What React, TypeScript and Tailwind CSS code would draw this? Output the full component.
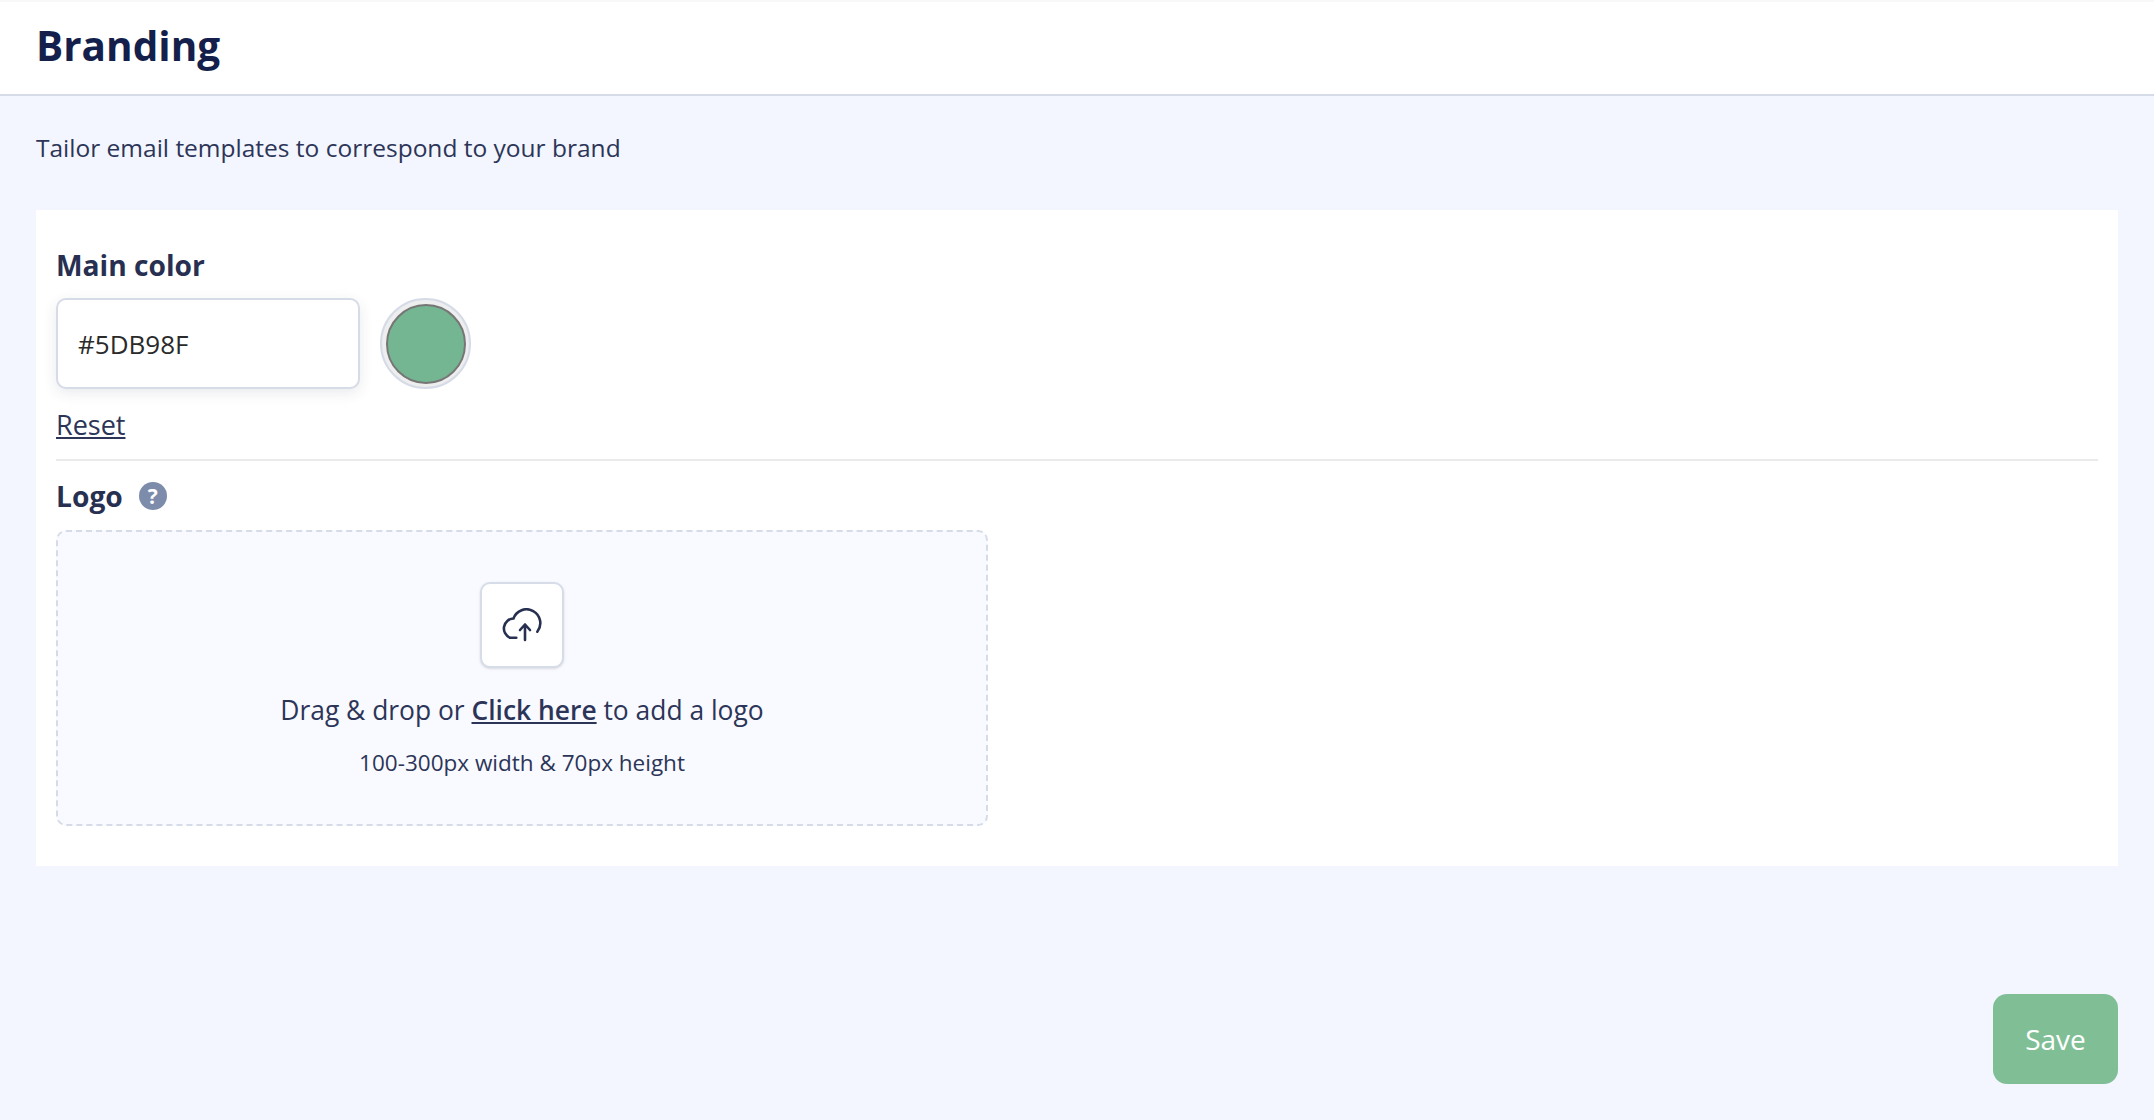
export default function App() {
  return (
    <div className="flex h-[1120px] flex-col bg-[#f3f6fe] font-['Open_Sans',sans-serif] text-[#2c3558]">
      <header className="flex h-[96px] items-center border-t-2 border-b-2 border-t-[#f8f8f8] border-b-[#d6dbe8] bg-white px-9 pb-[3px]">
        <h1 className="text-[40.5px] leading-none font-bold text-[#141f4b]">Branding</h1>
      </header>

      <div className="flex flex-1 flex-col px-9">
        <p className="mt-[37px] text-[24.5px] leading-[30px]">Tailor email templates to correspond to your brand</p>

        <section className="mt-[47px] bg-white px-5 pt-[36px] pb-[40px]">
          <h2 className="text-[28.2px] leading-[38px] font-bold text-[#283052]">Main color</h2>
          <div className="mt-[14px] flex items-center gap-5">
            <input
              readOnly
              value="#5DB98F"
              className="h-[91px] w-[304px] rounded-[10px] border-2 border-[#d6dbe8] bg-white px-5 text-[26px] text-[#2a2a2a] shadow-[0_4px_14px_rgba(40,48,82,0.1)]"
            />
            <div className="flex h-[91px] w-[91px] items-center justify-center rounded-full border-2 border-[#d6dbe8] bg-[#eeeeee]">
              <div className="h-[80px] w-[80px] rounded-full border-[2px] border-[#767676] bg-[#75b692]" />
            </div>
          </div>
          <a className="mt-[18px] block w-fit text-[27px] leading-[35px] underline">Reset</a>
          <div className="mt-[17px] h-[2px] bg-[#eaeaea]" />
          <div className="mt-[16px] flex items-center gap-4">
            <h2 className="text-[28.2px] leading-[38px] font-bold text-[#283052]">Logo</h2>
            <span className="flex h-7 w-7 items-center justify-center rounded-full bg-[#7d8cab] text-[21px] leading-none font-bold text-white">?</span>
          </div>
          <div className="mt-[15px] flex h-[296px] w-[932px] flex-col items-center rounded-[10px] border-2 border-dashed border-[#d6dbe8] bg-[#f9faff] pt-[50px]">
            <div className="flex h-[86px] w-[84px] items-center justify-center rounded-[10px] border-2 border-[#d6dde8] bg-white shadow-sm">
              <svg className="mr-[3px]" width="46" height="34" viewBox="0 0 44 34" fill="none" stroke="#283052" strokeWidth="2.6" strokeLinecap="round" strokeLinejoin="round">
                <path d="M17.3 29.7H11A10 10 0 0 1 14.5 10.5A13.8 13.8 0 1 1 38.3 23.7" />
                <path d="M26 32V17M21 22L26 16.5L31 22" />
              </svg>
            </div>
            <p className="mt-[24px] text-[26.4px] leading-[36px]">
              Drag &amp; drop or <a className="font-semibold underline">Click here</a> to add a logo
            </p>
            <p className="mt-[20px] text-[22.5px] leading-[30px]">100-300px width &amp; 70px height</p>
          </div>
        </section>

        <div className="mt-auto mb-[36px] flex justify-end">
          <button className="h-[90px] w-[125px] rounded-[14px] bg-[#80bf96] text-[28px] text-white">Save</button>
        </div>
      </div>
    </div>
  );
}
